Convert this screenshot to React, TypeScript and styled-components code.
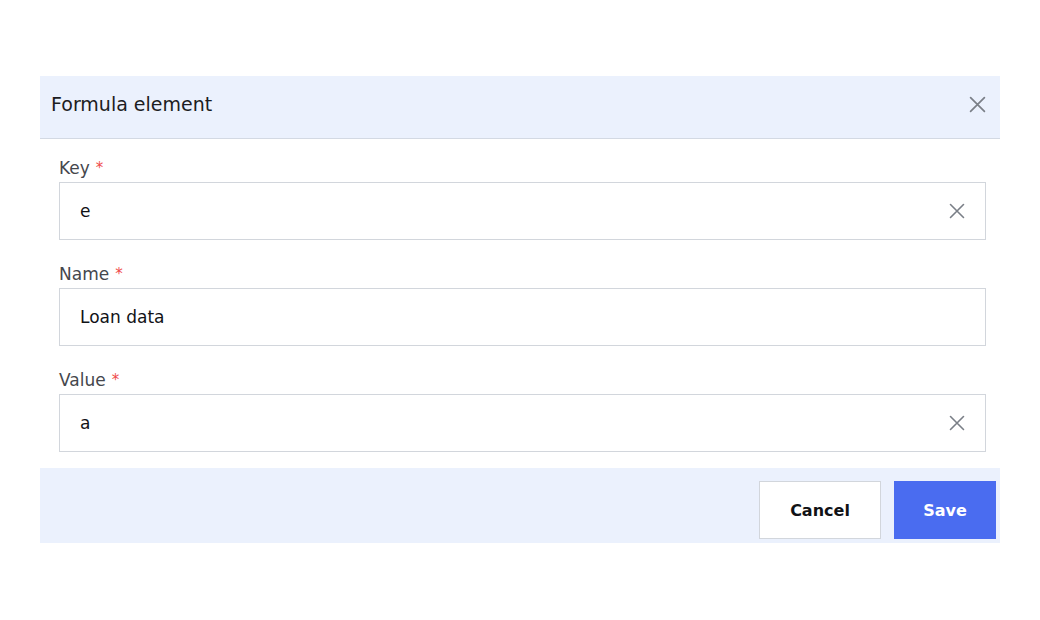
import React from 'react';
import styled, { createGlobalStyle } from 'styled-components';

const GlobalStyle = createGlobalStyle`
	html, body {
		margin: 0;
		padding: 0;
		background: #ffffff;
		font-family: 'DejaVu Sans', 'Noto Sans', sans-serif;
	}
`;

const Page = styled.div`
	width: 1040px;
	height: 620px;
	padding-top: 76px;
	box-sizing: border-box;
`;

const Dialog = styled.div`
	width: 960px;
	margin-left: 40px;
	background: #fff;
	display: flex;
	flex-direction: column;
`;

const Header = styled.div`
	height: 63px;
	box-sizing: border-box;
	background-color: #ebf1fd;
	border-bottom: 1px solid #d3d9e3;
	display: flex;
	align-items: center;
	padding: 0 13px 6px 11px;
	h2 {
		flex: 1;
		margin: 0;
		font-size: 19px;
		font-weight: 400;
		color: #1c1d22;
	}
`;

const Body = styled.div`
	padding: 18px 14px 16px 19px;
	display: flex;
	flex-direction: column;
	gap: 23px;
`;

const Field = styled.div`
	display: flex;
	flex-direction: column;
	gap: 3px;
`;

const Label = styled.label`
	height: 22px;
	font-size: 17px;
	line-height: 22px;
	color: #45474d;
	span {
		color: #ef4a4a;
		margin-left: 6px;
		font-size: 15px;
		line-height: 1;
		vertical-align: top;
		position: relative;
		top: 4px;
	}
`;

const InputBox = styled.div`
	height: 58px;
	box-sizing: border-box;
	border: 1px solid #d2d6dc;
	background: #fff;
	display: flex;
	align-items: center;
	padding: 0 19px 0 20px;
	font-size: 17px;
	color: #111216;
	div {
		flex: 1;
	}
`;

const IconButton = styled.button<{ size: number }>`
	border: none;
	background: none;
	padding: 0;
	width: ${({ size }) => size}px;
	height: ${({ size }) => size}px;
	display: flex;
	align-items: center;
	justify-content: center;
	color: #7a7f87;
	cursor: pointer;
`;

const Footer = styled.div`
	height: 75px;
	box-sizing: border-box;
	background-color: #ebf1fd;
	display: flex;
	justify-content: flex-end;
	gap: 13px;
	padding: 13px 4px 4px 0;
`;

const Button = styled.button<{ primary?: boolean }>`
	height: 58px;
	width: ${({ primary }) => (primary ? '102px' : '122px')};
	box-sizing: border-box;
	border: 1px solid ${({ primary }) => (primary ? '#4a6cf0' : '#d2d6dc')};
	background: ${({ primary }) => (primary ? '#4a6cf0' : '#ffffff')};
	color: ${({ primary }) => (primary ? '#ffffff' : '#111216')};
	font-family: 'DejaVu Sans', 'Noto Sans', sans-serif;
	font-size: 16px;
	font-weight: 700;
	cursor: pointer;
`;

const CloseIcon = ({ size }: { size: number }) => (
	<svg width={size} height={size} viewBox='0 0 16 16' fill='none'>
		<path d='M1.5 1.5L14.5 14.5M14.5 1.5L1.5 14.5' stroke='currentColor' strokeWidth='1.6' strokeLinecap='round' />
	</svg>
);

const fields = [
	{ label: 'Key', value: 'e', clearable: true },
	{ label: 'Name', value: 'Loan data', clearable: false },
	{ label: 'Value', value: 'a', clearable: true },
];

export default function App() {
	return (
		<Page>
			<GlobalStyle />
			<Dialog>
				<Header>
					<h2>Formula element</h2>
					<IconButton size={20}>
						<CloseIcon size={17} />
					</IconButton>
				</Header>
				<Body>
					{fields.map((f) => (
						<Field key={f.label}>
							<Label>
								{f.label}
								<span>*</span>
							</Label>
							<InputBox>
								<div>{f.value}</div>
								{f.clearable && (
									<IconButton size={18}>
										<CloseIcon size={16} />
									</IconButton>
								)}
							</InputBox>
						</Field>
					))}
				</Body>
				<Footer>
					<Button>Cancel</Button>
					<Button primary>Save</Button>
				</Footer>
			</Dialog>
		</Page>
	);
}
